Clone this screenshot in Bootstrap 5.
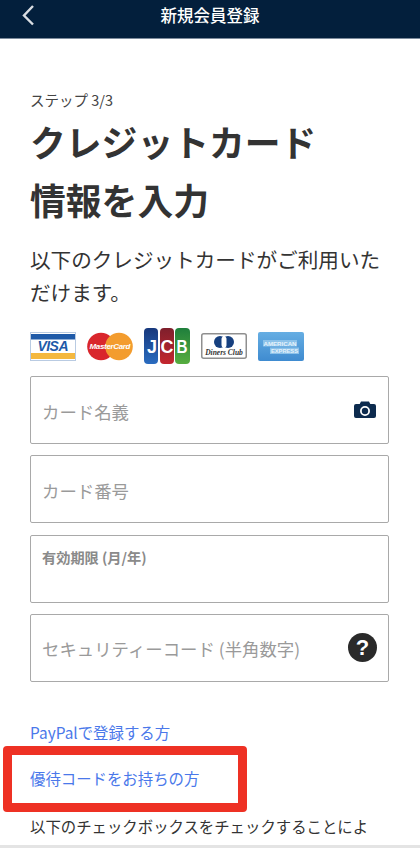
<!DOCTYPE html>
<html lang="ja">
<head>
<meta charset="utf-8">
<meta name="viewport" content="width=device-width, initial-scale=1">
<link href="https://cdn.jsdelivr.net/npm/bootstrap@5.3.0/dist/css/bootstrap.min.css" rel="stylesheet">
<style>
html, body { height: 848px; overflow: hidden; }
body { font-family: "Noto Sans CJK JP", "Noto Sans", sans-serif; color: #333; background: #fff; }
.topbar { height: 39px; background: #031f3c; border-bottom: 1px solid #7d8b9c; color: #fff; position: relative; }
.topbar-title { font-size: 16.5px; font-weight: 500; line-height: 30px; }
.back-btn { position: absolute; left: 21px; top: 4px; line-height: 0; }
.content-wrap { padding: 51px 31px 0 30px; }
.step-text { font-size: 14.5px; line-height: 20px; color: #444; margin: 0 0 2px; }
.page-title { font-size: 35.8px; font-weight: 700; line-height: 58px; color: #333; margin: 0 0 15px; }
.intro-text { font-size: 20.6px; line-height: 33px; color: #333; margin: 0 0 19px; }
.brand-row { display: flex; align-items: center; gap: 11px; height: 36px; margin-bottom: 12px; }
.field-box { position: relative; height: 68px; margin-bottom: 11.300px; }
.field-input.form-control { height: 100%; border: 1px solid #a9a9a9; border-radius: 2px; padding: 2px 11px 0; font-size: 17.4px; color: #333; background: #fff; }
.field-input.form-control::placeholder { color: #9a9a9a; opacity: 1; }
.field-label { position: absolute; left: 12px; top: 12px; font-size: 14.2px; line-height: 20px; font-weight: 700; color: #8a8a8a; }
.field-icon { position: absolute; line-height: 0; }
.icon-cam { right: 13px; top: 25px; }
.icon-help { right: 12px; top: 19px; width: 29px; height: 29px; border-radius: 50%; background: #2a2a2a; color: #fff; font-family: "Liberation Sans", sans-serif; font-weight: 700; font-size: 22px; line-height: 29px; text-align: center; }
.link-row { position: relative; margin-top: 38px; }
.link-item { display: block; font-size: 15.4px; line-height: 24px; color: #4a78ea; text-decoration: none; }
.link-item + .link-item { margin-top: 22px; }
.mark-box { position: absolute; left: -27px; top: 26px; width: 244px; height: 66px; border: 9px solid #ee3124; border-radius: 4px; pointer-events: none; }
.terms-text { font-size: 15.4px; line-height: 26px; color: #333; margin: 23px 0 0; white-space: nowrap; }
.terms-text a { color: #4a78ea; text-decoration: none; }
.bottom-band { position: fixed; left: 0; right: 0; bottom: 0; height: 3px; background: #e4e4e4; }
</style>
</head>
<body>
<header class="topbar d-flex justify-content-center">
  <a class="back-btn" href="#" aria-label="戻る">
    <svg width="14" height="22" viewBox="0 0 14 22"><path d="M12 2 3 11.500 12 20.500" fill="none" stroke="#d9dde2" stroke-width="2.400"/></svg>
  </a>
  <div class="topbar-title">新規会員登録</div>
</header>
<main class="content-wrap">
  <p class="step-text">ステップ 3/3</p>
  <h1 class="page-title">クレジットカード<br>情報を入力</h1>
  <p class="intro-text">以下のクレジットカードがご利用いただけます。</p>
  <div class="brand-row">
    <svg width="46" height="29" viewBox="0 0 46 29">
      <rect x=".5" y=".5" width="45" height="28" fill="#fff" stroke="#b9cbe2"/>
      <rect x="1" y="2" width="44" height="5.500" fill="#1f5aa8"/>
      <rect x="1" y="21" width="44" height="6" fill="#f4b83f"/>
      <text x="23" y="19" text-anchor="middle" font-family="Liberation Sans" font-weight="700" font-style="italic" font-size="14" fill="#1f5aa8" textLength="31">VISA</text>
    </svg>
    <svg width="46" height="29" viewBox="0 0 46 29">
      <circle cx="14" cy="14.500" r="13.800" fill="#d9262c"/>
      <circle cx="32" cy="14.500" r="13.800" fill="#f39c2e"/>
      <text x="23" y="17" text-anchor="middle" font-family="Liberation Sans" font-weight="700" font-style="italic" font-size="8" fill="#fff" textLength="41">MasterCard</text>
    </svg>
    <svg width="46" height="36" viewBox="0 0 46 36">
      <defs>
        <linearGradient id="jb" x1="0" y1="0" x2="0" y2="1"><stop offset="0" stop-color="#17387c"/><stop offset="1" stop-color="#2a6cc0"/></linearGradient>
        <linearGradient id="jr" x1="0" y1="0" x2="0" y2="1"><stop offset="0" stop-color="#7e1f2c"/><stop offset="1" stop-color="#c4262e"/></linearGradient>
        <linearGradient id="jg" x1="0" y1="0" x2="0" y2="1"><stop offset="0" stop-color="#1f7f3c"/><stop offset="1" stop-color="#57ad3f"/></linearGradient>
      </defs>
      <rect x="0" y="0" width="14" height="36" rx="4" fill="url(#jb)"/>
      <rect x="16" y="0" width="14" height="36" rx="4" fill="url(#jr)"/>
      <rect x="31" y="0" width="15" height="36" rx="4" fill="url(#jg)"/>
      <g font-family="Liberation Sans" font-weight="700" font-size="18" fill="#fff">
        <text x="3" y="25" textLength="10" lengthAdjust="spacingAndGlyphs">J</text>
        <text x="16.500" y="25" textLength="13" lengthAdjust="spacingAndGlyphs">C</text>
        <text x="32.500" y="25" textLength="11" lengthAdjust="spacingAndGlyphs">B</text>
      </g>
    </svg>
    <svg width="46" height="26" viewBox="0 0 46 26">
      <rect x=".75" y=".75" width="44.500" height="24.500" rx="2" fill="#fff" stroke="#8f8f8f" stroke-width="1.500"/>
      <circle cx="19" cy="9" r="6" fill="#17407f"/>
      <circle cx="27" cy="9" r="6" fill="#17407f"/>
      <rect x="20.500" y="3.500" width="5" height="11" rx="2.500" fill="#fff"/>
      <text x="23" y="21.500" text-anchor="middle" font-family="Liberation Serif" font-weight="700" font-style="italic" font-size="7.500" fill="#333">Diners Club</text>
    </svg>
    <svg width="46" height="29" viewBox="0 0 46 29">
      <defs><linearGradient id="ax" x1="0" y1="0" x2="0" y2="1"><stop offset="0" stop-color="#66aee3"/><stop offset="1" stop-color="#3f8bd0"/></linearGradient></defs>
      <rect width="46" height="29" rx="2" fill="url(#ax)"/>
      <rect x="5" y="8" width="34" height="6.500" fill="#8cc2ea"/>
      <rect x="12" y="15.500" width="29" height="6.500" fill="#8cc2ea"/>
      <text x="5.500" y="13.500" font-family="Liberation Sans" font-weight="700" font-size="6.200" fill="#e6f2fb" textLength="33" lengthAdjust="spacingAndGlyphs">AMERICAN</text>
      <text x="13" y="21" font-family="Liberation Sans" font-weight="700" font-size="6.200" fill="#e6f2fb" textLength="27" lengthAdjust="spacingAndGlyphs">EXPRESS</text>
    </svg>
  </div>
  <form>
    <div class="field-box">
      <input class="form-control field-input" type="text" placeholder="カード名義" aria-label="カード名義">
      <span class="field-icon icon-cam">
        <svg width="22" height="17" viewBox="0 0 22 17">
          <path fill="#0d2b4e" d="M7 0.500h8l1.300 2.500H20a2 2 0 0 1 2 2v10a2 2 0 0 1-2 2H2a2 2 0 0 1-2-2V5a2 2 0 0 1 2-2h3.700z"/>
          <circle cx="11" cy="10" r="4.100" fill="none" stroke="#fff" stroke-width="1.800"/>
        </svg>
      </span>
    </div>
    <div class="field-box">
      <input class="form-control field-input" type="text" placeholder="カード番号" aria-label="カード番号">
    </div>
    <div class="field-box">
      <input class="form-control field-input" type="text" aria-label="有効期限 (月/年)">
      <label class="field-label">有効期限 (月/年)</label>
    </div>
    <div class="field-box">
      <input class="form-control field-input" type="text" placeholder="セキュリティーコード (半角数字)" aria-label="セキュリティーコード (半角数字)">
      <span class="field-icon icon-help">?</span>
    </div>
  </form>
  <div class="link-row">
    <a class="link-item" href="#">PayPalで登録する方</a>
    <a class="link-item" href="#">優待コードをお持ちの方</a>
    <div class="mark-box"></div>
  </div>
  <p class="terms-text">以下のチェックボックスをチェックすることによ<br>り、<a href="#">利用規約</a>および<a href="#">プライバシーポリシー</a>に同意</p>
</main>
<div class="bottom-band"></div>
<script src="https://cdn.jsdelivr.net/npm/bootstrap@5.3.0/dist/js/bootstrap.bundle.min.js"></script>
</body>
</html>
